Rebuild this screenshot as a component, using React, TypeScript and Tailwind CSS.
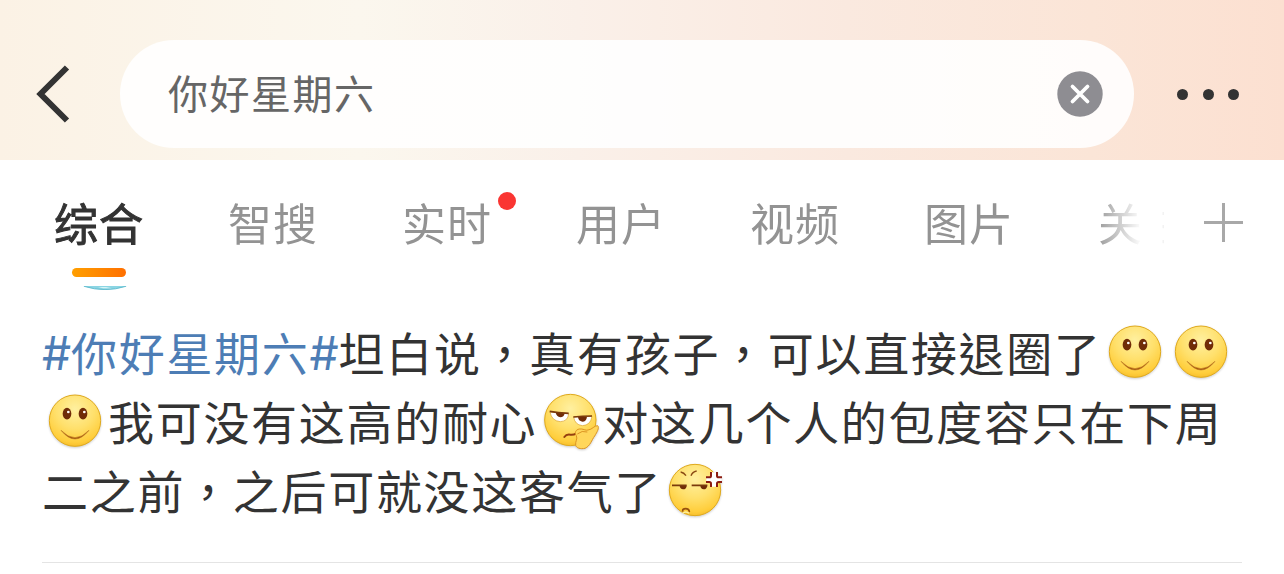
import { useId } from "react";
import clsx from "clsx";

const tabs = [
  { label: "综合", active: true },
  { label: "智搜" },
  { label: "实时", dot: true },
  { label: "用户" },
  { label: "视频" },
  { label: "图片" },
  { label: "关注" },
];

function FaceGradient({ id }: { id: string }) {
  return (
    <defs>
      <radialGradient id={id} cx="0.5" cy="0.28" r="0.75">
        <stop offset="0" stopColor="#fff0a0" />
        <stop offset="0.5" stopColor="#ffe06c" />
        <stop offset="0.85" stopColor="#ffce3c" />
        <stop offset="1" stopColor="#f5ba28" />
      </radialGradient>
    </defs>
  );
}

function Smile({ className }: { className?: string }) {
  const id = useId();
  return (
    <svg viewBox="54 45 162 162" className={clsx("h-[54px] w-[54px] shrink-0 overflow-visible drop-shadow-[0_1px_1px_rgba(0,0,0,0.2)]", className)}>
      <FaceGradient id={id} />
      <circle cx="135" cy="125" r="77" fill={`url(#${id})`} stroke="#dfa91c" strokeWidth="3" />
      <ellipse cx="111" cy="104" rx="13" ry="17.5" fill="#702c08" />
      <ellipse cx="159" cy="104" rx="13" ry="17.5" fill="#702c08" />
      <circle cx="115" cy="99" r="4" fill="#fff" />
      <circle cx="163" cy="99" r="4" fill="#fff" />
      <path d="M93 154Q135 206 177 154Q135 198 93 154Z" fill="#a85a10" stroke="#b0691a" strokeWidth="1.5" />
    </svg>
  );
}

function Bored({ className }: { className?: string }) {
  const id = useId();
  return (
    <svg viewBox="36 36 174 174" className={clsx("h-[58px] w-[58px] shrink-0 overflow-visible drop-shadow-[0_1px_1px_rgba(0,0,0,0.2)]", className)}>
      <FaceGradient id={id} />
      <circle cx="118" cy="120" r="77" fill={`url(#${id})`} stroke="#dfa91c" strokeWidth="3" />
      <path d="M57 96L113 101Q111 124 88 125Q62 123 57 96Z" fill="#fff" stroke="#d9a02a" strokeWidth="2" />
      <path d="M128 111L183 109Q179 136 154 137Q131 134 128 111Z" fill="#fff" stroke="#d9a02a" strokeWidth="2" />
      <path d="M74 97L101 100Q99 112 88 112Q76 110 74 97Z" fill="#702c08" />
      <path d="M141 111L168 110Q166 125 154 125Q142 123 141 111Z" fill="#702c08" />
      <path d="M56 94Q80 98 113 100M127 111Q154 108 183 108" stroke="#7a3a0c" strokeWidth="5" fill="none" />
      <path d="M100 171Q106 162 118 164Q128 165 135 161" stroke="#96400f" strokeWidth="6" fill="none" strokeLinecap="round" />
      <path d="M134 196C132 184 141 177 136 167C130 158 134 149 145 147C155 145 165 153 171 150C184 149 190 136 200 137C206 143 198 157 191 168C182 180 178 198 162 205C148 208 136 204 134 196Z" fill="#ffd65a" stroke="#dc9422" strokeWidth="3" />
      <path d="M139 162Q153 150 169 156" stroke="#dc9422" strokeWidth="3" fill="none" />
    </svg>
  );
}

function Annoyed({ className }: { className?: string }) {
  const id = useId();
  return (
    <svg viewBox="54 36 168 168" className={clsx("h-[56px] w-[56px] shrink-0 overflow-visible drop-shadow-[0_1px_1px_rgba(0,0,0,0.2)]", className)}>
      <FaceGradient id={id} />
      <circle cx="135" cy="120" r="77" fill={`url(#${id})`} stroke="#dfa91c" strokeWidth="3" />
      <path d="M92 66Q102 68 108 77M140 63Q127 66 123 77" stroke="#8a4a14" strokeWidth="4" fill="none" />
      <path d="M89 107H110Q109 118 99 118Q90 117 89 107Z" fill="#702c08" />
      <path d="M151 107H172Q170 118 161 118Q152 117 151 107Z" fill="#702c08" />
      <path d="M66 106H110M125 106H172" stroke="#7a3a0c" strokeWidth="5" />
      <path d="M98 183Q97 176 107 176Q116 176 118 184" stroke="#96500f" strokeWidth="5" fill="none" strokeLinecap="round" />
      <path d="M98 190Q107 182 117 190" stroke="#fff0a0" strokeWidth="4" fill="none" />
      <path d="M184 67V78Q183 83 178 83H169V95H178Q183 95 184 100V110H200V100Q201 95 206 95H215V83H206Q201 83 200 78V67Z" fill="#fff" />
      <path d="M183 66V77Q183 82 178 82H168M168 96H178Q183 96 183 101V111M201 111V101Q201 96 206 96H216M216 82H206Q201 82 201 77V66" stroke="#8c1c10" strokeWidth="6" fill="none" />
    </svg>
  );
}

function Header() {
  return (
    <header className="flex h-[160px] bg-[linear-gradient(to_right,#fbf2e5,#fbf7ee_28%,#faf0e9_45%,#fae9df_66%,#fbe5d7_85%,#fce0d1)] pt-10">
      <svg viewBox="0 0 34 58" className="ml-9 mt-[25px] h-[58px] w-[34px] shrink-0" fill="none" stroke="#333" strokeWidth="6">
        <path d="M31 2.5L4.5 29L31 55.5" />
      </svg>
      <div className="ml-[50px] flex h-[108px] w-[1014px] shrink-0 items-center justify-between rounded-full bg-white/90 pl-12 pr-[31px]">
        <span className="pb-1 text-[40px] leading-none tracking-[1.5px] text-[#666]">你好星期六</span>
        <svg viewBox="0 0 46 46" className="h-[46px] w-[46px]">
          <circle cx="23" cy="23" r="22.7" fill="#8e8d92" />
          <path d="M15.5 15.5L30.5 30.5M30.5 15.5L15.5 30.5" stroke="#fff" strokeWidth="3.8" strokeLinecap="round" />
        </svg>
      </div>
      <div className="ml-[43px] mt-[49px] flex h-[11px] gap-[14.5px]">
        <i className="h-[11px] w-[11px] rounded-full bg-[#333]" />
        <i className="h-[11px] w-[11px] rounded-full bg-[#333]" />
        <i className="h-[11px] w-[11px] rounded-full bg-[#333]" />
      </div>
    </header>
  );
}

function Tabs() {
  return (
    <nav className="flex h-[160px] justify-between pl-[54px] pr-[41px]">
      {/* the last tab fades out before the plus button */}
      <div className="flex w-[1110px] gap-[84px] overflow-hidden mask-[linear-gradient(to_right,#000_1040px,transparent_1088px,transparent_1108px,rgba(0,0,0,0.12)_1109px)]">
        {tabs.map((tab) => (
          <div key={tab.label} className="relative w-[90px] shrink-0 pt-8">
            <div
              className={clsx(
                "text-[44px] leading-[60px] tracking-[1px] whitespace-nowrap",
                tab.active ? "text-[#333] [-webkit-text-stroke:1px_#333]" : "text-[#939393]"
              )}
            >
              {tab.label}
            </div>
            {tab.dot && <i className="absolute left-[96px] top-8 h-[18px] w-[18px] rounded-full bg-[#fa3532]" />}
            {tab.active && (
              <>
                <div className="ml-[18px] mt-4 h-[9px] w-[54px] rounded-full bg-linear-to-r from-[#ff9f00] to-[#ff6f00]" />
                <svg viewBox="0 0 44 4" className="ml-[29px] mt-[9px] h-1 w-11">
                  <path d="M0 0H44Q22 7.5 0 0Z" fill="#8bd5e3" />
                  <path d="M1 .3Q22 7 43 .3" stroke="#56b5c9" strokeWidth=".8" fill="none" />
                  <path d="M15 1H23L29 2.3H20Z" fill="#d5f4f5" />
                </svg>
              </>
            )}
          </div>
        ))}
      </div>
      <svg viewBox="0 0 39 39" className="mt-[43px] h-[39px] w-[39px] shrink-0" stroke="#a8a8a8" strokeWidth="3">
        <path d="M19.5 0V39M0 19.5H39" />
      </svg>
    </nav>
  );
}

export default function App() {
  return (
    <div className="h-[574px] w-[1284px] overflow-hidden bg-white font-['Noto_Sans_CJK_SC',sans-serif]">
      <Header />
      <Tabs />
      <article className="px-[42px] font-['Noto_Sans_CJK_TC',sans-serif] text-[46px] leading-[69px] tracking-[1.7px] whitespace-nowrap text-[#333]">
        <div className="flex h-[69px] items-center">
          <span className="flex pb-1.5 text-[#4d7db5]">
            <span className="w-[29px] pt-[3px] font-['Inter',sans-serif] leading-[66px] tracking-normal">#</span>
            <span>你好星期六</span>
            <span className="w-[29px] pt-[3px] font-['Inter',sans-serif] leading-[66px] tracking-normal">#</span>
          </span>
          <span className="pb-1.5">坦白说，真有孩子，可以直接退圈了</span>
          <Smile className="mb-[5px] ml-1.5" />
          <Smile className="mb-[5px] ml-3" />
        </div>
        <div className="flex h-[69px] items-center">
          <Smile className="mb-[5px] ml-1.5" />
          <span className="ml-1.5 pb-1.5">我可没有这高的耐心</span>
          <Bored className="mb-[5px] ml-1.5" />
          <span className="ml-px pb-1.5">对这几个人的包度容只在下周</span>
        </div>
        <div className="flex h-[69px] items-center">
          <span className="pb-1.5">二之前，之后可就没这客气了</span>
          <Annoyed className="mb-[5px] ml-1.5" />
        </div>
        <hr className="mt-[35px] border-[#e4e4e4]" />
      </article>
    </div>
  );
}
